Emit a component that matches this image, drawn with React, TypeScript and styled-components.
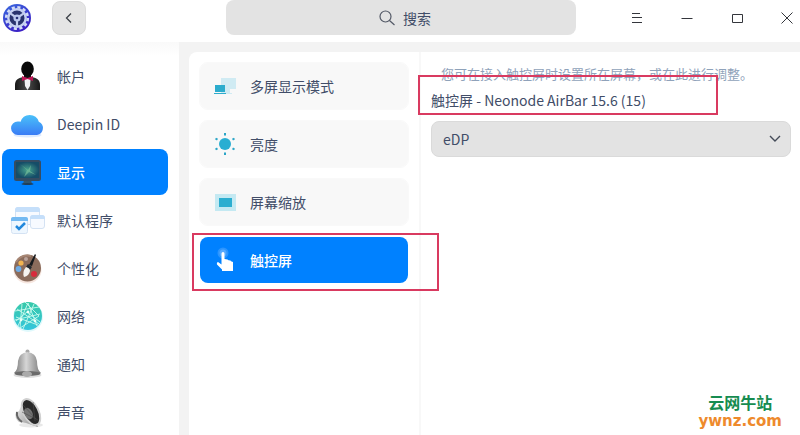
import React from "react";
import styled, { createGlobalStyle, css } from "styled-components";

const GlobalStyle = createGlobalStyle`
  * { box-sizing: border-box; }
  html, body { margin: 0; background: #fff; }
  body, button, input, select {
    font-family: "Noto Sans CJK SC", "Noto Sans", sans-serif;
    font-size: 14px;
    line-height: 20px;
    color: #414d68;
  }
  button { border: 0; padding: 0; background: none; cursor: pointer; }
  svg { display: block; flex: none; }
`;

const Window = styled.div`
  position: relative;
  display: flex;
  flex-direction: column;
  height: 100vh;
  overflow: hidden;
`;

const TitleBar = styled.header`
  flex: none;
  display: grid;
  grid-template-columns: 1fr minmax(0, 350px) 1fr;
  height: 42px;
  padding: 0 1px 0 3px;
`;

const TitleStart = styled.div`
  display: flex;
  align-items: center;
  gap: 21px;
  height: 35px;
`;

const BackButton = styled.button`
  display: grid;
  place-items: center;
  width: 34px;
  height: 34px;
  margin-top: 1px;
  border: 1px solid #dcdcdc;
  border-radius: 8px;
  background: #e5e5e5;
`;

const SearchBox = styled.label`
  display: flex;
  align-items: center;
  justify-content: center;
  gap: 8px;
  height: 35px;
  padding-left: 8px;
  border-radius: 8px;
  background: #e3e3e3;
`;

const SearchInput = styled.input`
  field-sizing: content;
  min-width: 28px;
  padding: 0;
  border: 0;
  outline: 0;
  background: none;
  &::placeholder { color: #414d68; opacity: 1; }
`;

const WindowControls = styled.div`
  display: flex;
  justify-content: flex-end;
  align-items: center;
  gap: 26px;
  height: 36px;
`;

const ControlButton = styled.button`
  display: grid;
  place-items: center;
  width: 24px;
  height: 24px;
`;

const Body = styled.div`
  flex: 1;
  display: flex;
  min-height: 0;
  background: #f3f3f3;
`;

const Sidebar = styled.nav`
  flex: none;
  display: flex;
  flex-direction: column;
  gap: 2px;
  width: 179px;
  padding: 11px 11px 0 2px;
  background: linear-gradient(#f9f9f9, #fff 14px);
`;

const selectedItem = css`
  background-color: #0081ff;
  color: #fff;
  font-weight: 500;
`;

const SidebarItem = styled.button<{ $selected?: boolean }>`
  flex: none;
  display: flex;
  align-items: center;
  gap: 12px;
  height: 46px;
  padding-left: 7px;
  border-radius: 8px;
  text-align: left;
  ${(p) => p.$selected && selectedItem}
`;

const Content = styled.main`
  flex: 1;
  display: flex;
  min-width: 0;
  margin: 10px 0 0 10px;
  border-radius: 8px 0 0 0;
  background: #fff;
`;

const SubMenu = styled.nav`
  flex: none;
  display: flex;
  flex-direction: column;
  gap: 10px;
  width: 232px;
  padding: 10px 10px 0;
  border-right: 2px solid #f8f8f8;
`;

const SubMenuItem = styled.button<{ $selected?: boolean }>`
  display: flex;
  align-items: center;
  gap: 12px;
  height: 48px;
  padding-left: 12px;
  border: 1px solid ${(p) => (p.$selected ? "transparent" : "#f9f9f9")};
  border-radius: 9px;
  background-color: #f8f8f8;
  background-clip: padding-box;
  text-align: left;
  ${(p) => p.$selected && selectedItem}
`;

const Detail = styled.section`
  flex: 1;
  min-width: 0;
  padding: 12px 9px 0 10px;
`;

const Hint = styled.p`
  margin: 0 0 6px 10px;
  font-size: 13px;
  line-height: 20px;
  color: #8fa2ba;
  white-space: nowrap;
`;

const DeviceLabel = styled.label`
  display: block;
  margin-bottom: 11px;
`;

const SelectWrap = styled.div`
  display: grid;
  align-items: center;
  & > * { grid-area: 1 / 1; }
  & > svg { justify-self: end; margin-right: 10px; pointer-events: none; }
`;

const ScreenSelect = styled.select`
  appearance: none;
  width: 100%;
  height: 36px;
  padding: 0 32px 0 11px;
  border: 1px solid #dadada;
  border-radius: 8px;
  background: #e3e3e3;
`;

const Marker = styled.div<{ $x: number; $y: number; $w: number; $h: number }>`
  position: absolute;
  left: ${(p) => p.$x}px;
  top: ${(p) => p.$y}px;
  width: ${(p) => p.$w}px;
  height: ${(p) => p.$h}px;
  border: 2px solid #d93a60;
  pointer-events: none;
`;

const Watermark = styled.div`
  position: absolute;
  right: 18px;
  bottom: 6px;
  display: flex;
  flex-direction: column;
  align-items: center;
  font-weight: 700;
`;

const WatermarkName = styled.span`
  font-family: "Liberation Sans", "Noto Sans CJK SC", sans-serif;
  font-size: 16px;
  line-height: 18px;
  color: #168c50;
`;

const WatermarkSite = styled.span`
  font-family: "DejaVu Sans", sans-serif;
  font-size: 15px;
  line-height: 16px;
  color: #ee8a2c;
`;

const Logo = () => (
  <svg width="28" height="28" viewBox="0 0 28 28" aria-hidden="true">
    <defs>
      <linearGradient id="logoBg" x1="0" y1="0" x2="0.6" y2="1">
        <stop offset="0" stopColor="#3a6be0" />
        <stop offset="1" stopColor="#3b1fc4" />
      </linearGradient>
    </defs>
    <circle cx="14" cy="14" r="14" fill="url(#logoBg)" />
    <circle cx="14" cy="14" r="10.8" fill="none" stroke="#d3dcf6" strokeWidth="2.6" strokeDasharray="3.1 2.555" />
    <circle cx="14" cy="14" r="8.7" fill="#29336e" stroke="#c6d1f2" strokeWidth="2.4" />
    <path d="M14 14 7.6 9.6M14 14l6.4-4.4M14 14v8" stroke="#c2cdef" strokeWidth="2.2" />
    <circle cx="14" cy="14" r="3.6" fill="#b9c6ed" />
    <circle cx="14" cy="14" r="1.3" fill="#27317a" />
  </svg>
);

const AccountIcon = () => (
  <svg width="36" height="36" viewBox="0 0 36 36" aria-hidden="true">
    <defs>
      <linearGradient id="suit" x1="0" y1="0" x2="1" y2="0">
        <stop offset="0" stopColor="#171717" /><stop offset=".5" stopColor="#4b4b4b" /><stop offset="1" stopColor="#171717" />
      </linearGradient>
    </defs>
    <path d="M6 32v-5c0-5 3-7 8-8h9c5 1 8 3 8 8v5z" fill="url(#suit)" />
    <path d="M15.500 21h6l-.5 7-2.500 4-2.500-4z" fill="#f2f2f4" />
    <path d="M15 14h7v5l-3.500 2-3.500-2z" fill="#111" />
    <ellipse cx="18.500" cy="11" rx="6.300" ry="7.500" fill="#090909" />
    <path d="m13 18 5.500 2 5.500-2v5l-5.500-2-5.500 2z" fill="#bd1655" />
  </svg>
);

const CloudIcon = () => (
  <svg width="36" height="36" viewBox="0 0 36 36" aria-hidden="true">
    <defs>
      <linearGradient id="cloud" gradientUnits="userSpaceOnUse" x1="0" y1="7" x2="0" y2="29">
        <stop offset="0" stopColor="#4cc8fa" /><stop offset="1" stopColor="#397cf5" />
      </linearGradient>
    </defs>
    <ellipse cx="18.500" cy="29" rx="14" ry="2.500" fill="#dceaff" />
    <path d="M9 29a6.800 6.800 0 0 1-.3-13.600c1 0 2 .1 2.900.4a9.500 9.500 0 0 1 18.200-.1A7 7 0 0 1 28 29z" fill="url(#cloud)" />
  </svg>
);

const DisplayIcon = () => (
  <svg width="36" height="36" viewBox="0 0 36 36" aria-hidden="true">
    <defs>
      <radialGradient id="screen"><stop offset="0" stopColor="#49a48e" /><stop offset="1" stopColor="#154d68" /></radialGradient>
    </defs>
    <path d="m15 26-1 4h9l-1-4z" fill="#315670" />
    <ellipse cx="18.500" cy="30" rx="6" ry="1" fill="#203e5b" />
    <rect x="5" y="6" width="27" height="21" rx="2.500" fill="#354c62" />
    <rect x="7" y="8" width="23" height="16" fill="url(#screen)" />
    <path d="m11 10 8 6 3-5-1 6 6 4-7-3-5 5 3-7z" fill="#7bc29b" opacity=".65" />
  </svg>
);

const DefaultAppsIcon = () => (
  <svg width="36" height="36" viewBox="0 0 36 36" aria-hidden="true">
    <g stroke="#d4e2f3" strokeWidth="1" fill="#f7faff">
      <rect x="6.500" y="5.500" width="24" height="17" rx="2.500" />
      <rect x="21.500" y="13.500" width="14" height="13" rx="2.500" />
      <rect x="2.500" y="15.500" width="16" height="16" rx="2" fill="#eef7ff" />
    </g>
    <path d="M6 8q0-3 3-3h19q3 0 3 3v2H6zM21 16q0-3 3-3h9q3 0 3 3v1H21z" fill="#c5dffa" />
    <path d="M2 17q0-2 2-2h13q2 0 2 2v2H2z" fill="#74baf2" />
    <path d="m7 24 3 3 6-6" fill="none" stroke="#2288dc" strokeWidth="2.500" />
  </svg>
);

const PaletteIcon = () => (
  <svg width="36" height="36" viewBox="0 0 36 36" aria-hidden="true">
    <ellipse cx="18.500" cy="20" rx="14" ry="13.500" fill="#f6e6df" />
    <circle cx="18.500" cy="18" r="13.500" fill="#8b6c5c" />
    <path d="M7 12Q12 4 22 6" fill="none" stroke="#a78674" strokeWidth="2" />
    <circle cx="12" cy="13" r="2.600" fill="#f2b450" /><circle cx="17" cy="9" r="2" fill="#b9a29a" />
    <circle cx="9.500" cy="19" r="2.900" fill="#70ace5" /><circle cx="25" cy="24" r="3" fill="#d82b3c" />
    <path d="m26 4-6 11 3 1 4-11z" fill="#171a1e" />
    <path d="m19 14 4 3-2 3-4-3z" fill="#242a30" />
    <path d="M17 17q4 1 4 4-1 5-6 6-2-5 2-10z" fill="#f5f3ef" />
  </svg>
);

const NetworkIcon = () => (
  <svg width="36" height="36" viewBox="0 0 36 36" aria-hidden="true">
    <defs>
      <linearGradient id="globe" x1="0" y1="0" x2="0" y2="1"><stop offset="0" stopColor="#37c9a8" /><stop offset="1" stopColor="#34c5dc" /></linearGradient>
    </defs>
    <circle cx="19" cy="19" r="15" fill="#e0f9fc" />
    <circle cx="19" cy="18" r="14" fill="url(#globe)" />
    <path d="m6 13 24-4M6 22l25-6M9 28l10-23 9 23M7 23l11-9 13 10M8 11l22 15M13 6l-2 24 19-12-14-14M7 19l22 8M25 6 14 31" fill="none" stroke="#c9fbed" strokeWidth=".9" />
    <g fill="#f0fff8"><circle cx="19" cy="14" r="1.400" /><circle cx="12" cy="22" r="1.400" /><circle cx="26" cy="23" r="1.400" /></g>
  </svg>
);

const BellIcon = () => (
  <svg width="36" height="36" viewBox="0 0 36 36" aria-hidden="true">
    <defs>
      <linearGradient id="bell"><stop offset="0" stopColor="#777" /><stop offset=".45" stopColor="#d6d6d6" /><stop offset="1" stopColor="#7b7b7b" /></linearGradient>
    </defs>
    <ellipse cx="18.500" cy="29" rx="14" ry="3" fill="#dedede" />
    <circle cx="18.500" cy="5.500" r="2" fill="#a8a8a8" />
    <path d="M5 27q4-3 4-12Q10 7 18.500 6 27 7 28 15q0 9 4 12z" fill="url(#bell)" />
    <ellipse cx="18.500" cy="27.500" rx="13" ry="2.500" fill="#6b6b6b" />
    <ellipse cx="18" cy="28" rx="5" ry="3" fill="#aaa" />
  </svg>
);

const SoundIcon = () => (
  <svg width="36" height="36" viewBox="0 0 36 36" aria-hidden="true">
    <defs>
      <linearGradient id="speaker" x1="0" y1="0" x2="1" y2="1"><stop offset="0" stopColor="#f6f6f6" /><stop offset="1" stopColor="#8b8b8b" /></linearGradient>
    </defs>
    <ellipse cx="22" cy="31" rx="12" ry="2.500" fill="#e8e8e8" />
    <path d="m15 5-5 12-3 1q-2 6 3 10l7 1 12 4z" fill="url(#speaker)" />
    <path d="M8 18q-1 6 5 10" fill="none" stroke="#656565" strokeWidth="2" />
    <ellipse cx="22" cy="18" rx="7.500" ry="14" transform="rotate(-27 22 18)" fill="#292929" stroke="#d0d0d0" strokeWidth="2" />
    <ellipse cx="19.500" cy="19.500" rx="4" ry="6" transform="rotate(-27 19.500 19.500)" fill="#747474" />
    <path d="m14 11 13 14M24 8l2 19M13 18l16 8" stroke="#4b4b4b" strokeWidth=".6" />
  </svg>
);

const MultiScreenIcon = () => (
  <svg width="26" height="26" viewBox="0 0 26 26" aria-hidden="true">
    <path d="M9 5h15v11h-6v4h2v1H9z" fill="#d0ebf3" />
    <path d="M3 12h10v7H3z" fill="#2caccd" /><path d="M2 20h12v1H2z" fill="#2caccd" />
  </svg>
);

const BrightnessIcon = () => (
  <svg width="26" height="26" viewBox="0 0 26 26" aria-hidden="true">
    <circle cx="13" cy="13" r="6" fill="#29aed2" />
    <path d="M13 2v2.500M13 21.500V24M3.500 7.500l2 1.200M20.500 17.300l2 1.200M3.500 18.500l2-1.200M20.500 8.700l2-1.200" stroke="#2ba5c7" strokeWidth="2" />
  </svg>
);

const ScaleIcon = () => (
  <svg width="26" height="26" viewBox="0 0 26 26" aria-hidden="true">
    <path d="M3 5h21v17H3z" fill="#c4e9f2" /><path d="M7 9h13v9H7z" fill="#2caed0" />
  </svg>
);

const TouchIcon = () => (
  <svg width="26" height="26" viewBox="0 0 26 26" aria-hidden="true">
    <circle cx="11" cy="6" r="5.500" fill="#2b95ff" />
    <circle cx="11" cy="6" r="3.500" fill="#55a9ff" />
    <path d="M9.500 6.500a1.500 1.500 0 0 1 3 0V12l3 .5 1 .8 2 .2.5.8 2 .7V24H10v-1.500l-5-5q-.5-2 1-2.500l3.500 2.500z" fill="#fff" />
  </svg>
);

const SearchIcon = () => (
  <svg width="16" height="16" viewBox="0 0 16 16" fill="none" stroke="#535966" strokeWidth="1.200" aria-hidden="true">
    <circle cx="6.500" cy="6.500" r="5.500" /><path d="m10.500 10.500 5 4.500" />
  </svg>
);

const sections = [
  { label: "帐户", Icon: AccountIcon },
  { label: "Deepin ID", Icon: CloudIcon },
  { label: "显示", Icon: DisplayIcon, selected: true },
  { label: "默认程序", Icon: DefaultAppsIcon },
  { label: "个性化", Icon: PaletteIcon },
  { label: "网络", Icon: NetworkIcon },
  { label: "通知", Icon: BellIcon },
  { label: "声音", Icon: SoundIcon },
];

const displayPages = [
  { label: "多屏显示模式", Icon: MultiScreenIcon },
  { label: "亮度", Icon: BrightnessIcon },
  { label: "屏幕缩放", Icon: ScaleIcon },
  { label: "触控屏", Icon: TouchIcon, selected: true },
];

const controls = [
  { label: "菜单", path: "M3 3.500h8M3 7.500h10M3 12.500h10" },
  { label: "最小化", path: "M2.500 8.500h11" },
  { label: "最大化", path: "M3.500 4.500h10v8h-10z" },
  { label: "关闭", path: "m2.500 2.500 11 11M13.500 2.500l-11 11" },
];

export default function App() {
  return (
    <Window>
      <GlobalStyle />
      <TitleBar>
        <TitleStart>
          <Logo />
          <BackButton aria-label="返回">
            <svg width="10" height="12" viewBox="0 0 10 12" fill="none" stroke="#3c4148" strokeWidth="1.300">
              <path d="M7 1.500 2.500 6 7 10.500" />
            </svg>
          </BackButton>
        </TitleStart>
        <SearchBox>
          <SearchIcon />
          <SearchInput type="text" placeholder="搜索" aria-label="搜索" />
        </SearchBox>
        <WindowControls>
          {controls.map(({ label, path }) => (
            <ControlButton key={label} aria-label={label}>
              <svg width="16" height="16" viewBox="0 0 16 16" fill="none" stroke="#34363c"><path d={path} /></svg>
            </ControlButton>
          ))}
        </WindowControls>
      </TitleBar>
      <Body>
        <Sidebar>
          {sections.map(({ label, Icon, selected }) => (
            <SidebarItem key={label} $selected={selected} aria-current={selected ? "page" : undefined}>
              <Icon />{label}
            </SidebarItem>
          ))}
        </Sidebar>
        <Content>
          <SubMenu>
            {displayPages.map(({ label, Icon, selected }) => (
              <SubMenuItem key={label} $selected={selected} aria-current={selected ? "page" : undefined}>
                <Icon />{label}
              </SubMenuItem>
            ))}
          </SubMenu>
          <Detail>
            <Hint>您可在接入触控屏时设置所在屏幕，或在此进行调整。</Hint>
            <DeviceLabel htmlFor="screen-select">触控屏 - Neonode AirBar 15.6 (15)</DeviceLabel>
            <SelectWrap>
              <ScreenSelect id="screen-select"><option>eDP</option></ScreenSelect>
              <svg width="12" height="8" viewBox="0 0 12 8" fill="none" stroke="#444b58" strokeWidth="1.400" aria-hidden="true">
                <path d="m1 1 5 5 5-5" />
              </svg>
            </SelectWrap>
          </Detail>
        </Content>
      </Body>
      <Marker $x={192} $y={233} $w={247} $h={58} />
      <Marker $x={418} $y={75} $w={300} $h={40} />
      <Watermark>
        <WatermarkName>云网牛站</WatermarkName>
        <WatermarkSite>ywnz.com</WatermarkSite>
      </Watermark>
    </Window>
  );
}
